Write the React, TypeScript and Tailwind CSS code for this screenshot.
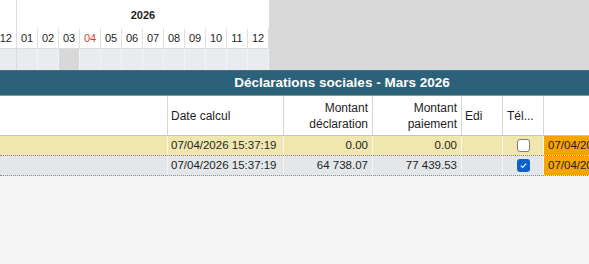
import React from "react"

const months = ["01", "02", "03", "04", "05", "06", "07", "08", "09", "10", "11", "12"]

function Checkbox({ checked }: { checked: boolean }) {
  if (checked) {
    return (
      <div className="w-[13px] h-[13px] rounded-[3px] bg-[#0b62c9] flex items-center justify-center">
        <svg viewBox="0 0 10 10" className="w-[9px] h-[9px]" fill="none" stroke="white" strokeWidth="1.2">
          <path d="M2 5.2 L4.1 7.2 L8 2.8" />
        </svg>
      </div>
    )
  }
  return <div className="w-[13px] h-[13px] rounded-[3px] bg-white border border-[#7d7d7d]" />
}

const rows = [
  { bg: "bg-[#efe7ae]", date: "07/04/2026 15:37:19", decl: "0.00", paie: "0.00", tel: false },
  { bg: "bg-[#e3e7ea]", date: "07/04/2026 15:37:19", decl: "64 738.07", paie: "77 439.53", tel: true },
]

const cols = "grid grid-cols-[168px_116px_89px_89px_41px_41px_140px]"

export default function App() {
  return (
    <div
      className="w-[589px] h-[264px] overflow-hidden bg-[#f5f5f5] text-[#1e1e1e]"
      style={{ fontFamily: '"Liberation Sans", Arial, sans-serif' }}
    >
      {/* timeline */}
      <div className="flex h-[70px]">
        <div className="flex bg-white">
          <div className="w-[17px] flex flex-col border-r border-[#dcdcdc]">
            <div className="h-[28px]" />
            <div className="h-[21px] flex items-center justify-end pr-[4px] text-[11px] border-b border-[#dcdcdc]">12</div>
            <div className="flex-1 bg-[#e9ecee]" />
          </div>
          <div className="w-[252px] flex flex-col">
            <div className="h-[28px] flex items-center justify-center text-[11px] font-bold pt-[2px]">2026</div>
            <div className="grid grid-cols-12 h-[21px] border-b border-[#dcdcdc]">
              {months.map((m) => (
                <div
                  key={m}
                  className={`flex items-center justify-center text-[11px] border-r border-[#e0e0e0] ${
                    m === "04" ? "text-[#d2442f]" : ""
                  }`}
                >
                  {m}
                </div>
              ))}
            </div>
            <div className="grid grid-cols-12 flex-1">
              {months.map((m) => (
                <div
                  key={m}
                  className={`border-r border-[#f4f5f6] ${m === "03" ? "bg-[#d8d8d8]" : "bg-[#e9ecee]"}`}
                />
              ))}
            </div>
          </div>
        </div>
        <div className="flex-1 bg-[#d9d9d9]" />
      </div>

      {/* table */}
      <div className="w-[684px]">
        <div className="h-[26px] bg-[#2b6179] border-t border-[#40708a] border-b border-b-[#8a9499] flex items-center justify-center text-white font-bold text-[13.5px]">
          Déclarations sociales - Mars 2026
        </div>

        <div className={`${cols} h-[40px] bg-white border-b border-[#c4c4c4] text-[12px]`}>
          <div className="border-r border-[#d6d6d6]" />
          <div className="border-r border-[#d6d6d6] flex items-center pl-[3px]">Date calcul</div>
          <div className="border-r border-[#d6d6d6] flex flex-col justify-center items-end pr-[4px] leading-[16px]">
            <span>Montant</span>
            <span>déclaration</span>
          </div>
          <div className="border-r border-[#d6d6d6] flex flex-col justify-center items-end pr-[4px] leading-[16px]">
            <span>Montant</span>
            <span>paiement</span>
          </div>
          <div className="border-r border-[#d6d6d6] flex items-center pl-[3px]">Edi</div>
          <div className="border-r border-[#d6d6d6] flex items-center pl-[4px]">Tél...</div>
          <div />
        </div>

        {rows.map((r, i) => (
          <div key={i} className={`${cols} h-[20px] ${r.bg} border-b border-dotted border-[#8c8c8c] text-[11.5px]`}>
            <div className="border-r border-[#f6f6f0]" />
            <div className="border-r border-[#f6f6f0] flex items-center pl-[3px]">{r.date}</div>
            <div className="border-r border-[#f6f6f0] flex items-center justify-end pr-[4px]">{r.decl}</div>
            <div className="border-r border-[#f6f6f0] flex items-center justify-end pr-[4px]">{r.paie}</div>
            <div className="border-r border-[#f6f6f0]" />
            <div className="border-r border-[#f6f6f0] flex items-center justify-center pl-[1px]">
              <Checkbox checked={r.tel} />
            </div>
            <div className="bg-[#f7a300] flex items-center pl-[4px]">{r.date}</div>
          </div>
        ))}
      </div>
    </div>
  )
}
